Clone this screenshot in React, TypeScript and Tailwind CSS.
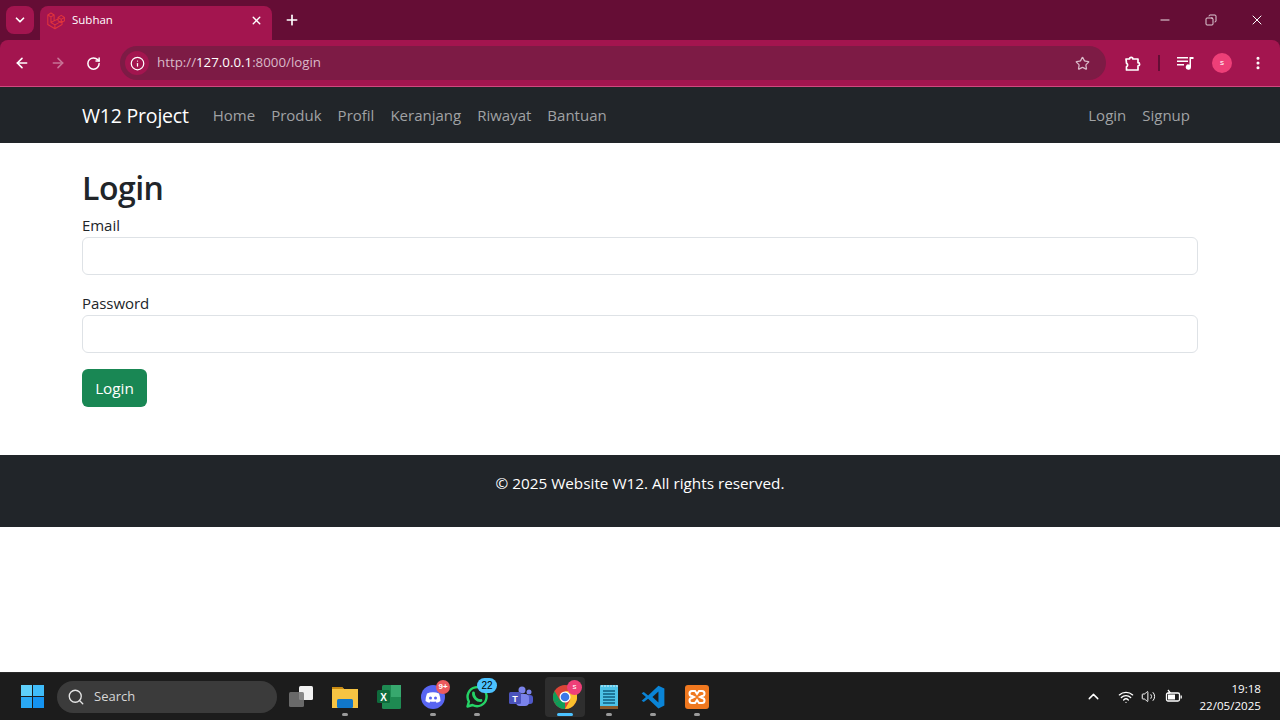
import React from "react";
import { ArrowLeft, ArrowRight, ChevronDown, ChevronUp, Copy, EllipsisVertical, Info, Minus, Plus, RotateCw, Search, Star, Volume2, Wifi, X } from "lucide-react";

const font = "font-['Open_Sans','Noto_Sans',sans-serif]";

const navLinks = ["Home", "Produk", "Profil", "Keranjang", "Riwayat", "Bantuan"];

const Laravel = () => (
  <svg width="19" height="19" viewBox="0 0 24 24" fill="none" stroke="#e0343c" strokeWidth="1.3" strokeLinejoin="round">
    <path d="M1 5L5 2.500L9 5L5 7.500zM1 5V17L10 22.500L19 17V12.500M5 7.500V14.500L10 17.500L19 12.500M9 5V12.500L5 14.500M10 17.500V22.500M14 8L18 5.500L22 8L18 10.500zM14 8V12.500L18 15M22 8V12.500L18 15M18 10.500V15M9 12.500L14 10" />
  </svg>
);

const TaskIcon = ({ children, active, open }: { children: React.ReactNode; active?: boolean; open?: boolean }) => (
  <div className={`relative flex h-[40px] w-[40px] items-center justify-center rounded ${active ? "bg-[#2e2e2e]" : ""}`}>
    <div className="flex h-[26px] w-[26px] items-center justify-center">{children}</div>
    {active ? <div className="absolute bottom-[1px] left-[12px] h-[3px] w-[16px] rounded-full bg-[#4cc2ff]" /> : null}
    {open ? <div className="absolute bottom-[1px] left-[17px] h-[3px] w-[6px] rounded-full bg-[#9a9a9a]" /> : null}
  </div>
);

const ChromeBar = () => (
  <div className="flex h-[87px] flex-col bg-[#650d35] font-['Liberation_Sans',sans-serif]">
    <div className="flex h-[40px] items-center">
      <div className="ml-[6px] flex h-[28px] w-[28px] items-center justify-center rounded-lg bg-[#a3154f]">
        <ChevronDown size={14} strokeWidth={3} className="text-white" />
      </div>
      <div className="ml-[6px] mt-[6px] flex h-[34px] w-[232px] items-center rounded-t-lg bg-[#a3154f] pb-[6px] pl-[7px] pr-[9px]">
        <Laravel />
        <span className={`ml-[6px] flex-1 text-[11.500px] text-white ${font}`}>Subhan</span>
        <X size={13} strokeWidth={2.6} className="text-white" />
      </div>
      <Plus size={16} strokeWidth={2.5} className="ml-[12px] text-white" />
      <div className="ml-auto flex items-center text-white">
        <div className="flex w-[46px] justify-center"><Minus size={14} strokeWidth={1.5} /></div>
        <div className="flex w-[46px] justify-center"><Copy size={12} strokeWidth={1.6} className="-scale-x-100" /></div>
        <div className="flex w-[46px] justify-center"><X size={16} strokeWidth={1.5} /></div>
      </div>
    </div>
    <div className="flex h-[47px] items-center rounded-t-lg border-b border-[#d0497f] bg-[#a3154f] text-white">
      <div className="flex w-[120px] items-center">
        <ArrowLeft size={16} strokeWidth={2.4} className="ml-[14px]" />
        <ArrowRight size={16} strokeWidth={2.4} className="ml-[20px] opacity-40" />
        <RotateCw size={15} strokeWidth={2.4} className="ml-[20px]" />
      </div>
      <div className="flex h-[34px] w-[986px] items-center rounded-full bg-[#7d1b45] pl-[5px] pr-[16px]">
        <div className="flex h-[24px] w-[24px] items-center justify-center rounded-full bg-[#a3154f]">
          <Info size={15} strokeWidth={2} />
        </div>
        <span className={`ml-[8px] flex-1 text-[13.300px] text-[#d9b9c8] ${font}`}>
          http://<span className="text-white">127.0.0.1</span>:8000/login
        </span>
        <Star size={15} strokeWidth={2} className="text-[#d9b9c8]" />
      </div>
      <svg width="18" height="18" viewBox="0 0 18 18" fill="none" stroke="#fff" strokeWidth="1.700" strokeLinejoin="round" className="ml-[18px]">
        <path d="M2 5h3.500a1.700 1.700 0 0 1 3.400 0H14v3.700a1.600 1.600 0 0 1 0 3.200V16H2.500v-3.200a2 2 0 0 0 0-3.600z" />
      </svg>
      <div className="ml-[16px] h-[16px] w-[2px] bg-[#650d35]" />
      <svg width="18" height="14" viewBox="0 0 18 14" fill="#fff" className="ml-[17px]">
        <path d="M0 1h11v1.500H0zM0 4.500h11V6H0zM0 8h7v1.500H0z" />
        <path d="M12.500 1H16.500V3H14V11a2.600 2.600 0 1 1-1.500-2.300z" />
      </svg>
      <div className="ml-[17px] flex h-[20px] w-[20px] items-center justify-center rounded-full bg-[#ee3f78] text-[8px]">s</div>
      <EllipsisVertical size={16} strokeWidth={2.6} className="ml-[18px]" />
    </div>
  </div>
);

const Navbar = () => (
  <nav className={`flex h-[56px] items-center bg-[#212529] pl-[82px] pr-[90px] ${font}`}>
    <span className="mt-[2px] text-[19.500px] tracking-[-0.2px] text-white">W12 Project</span>
    <div className="ml-[24px] flex gap-[16px]">
      {navLinks.map((link) => (
        <span key={link} className="text-[15px] text-[#a0a2a4]">{link}</span>
      ))}
    </div>
    <div className="ml-auto flex gap-[16px] text-[15px] text-[#a0a2a4]">
      <span>Login</span>
      <span>Signup</span>
    </div>
  </nav>
);

const Field = ({ label }: { label: string }) => (
  <div className="mb-[16px]">
    <label className="block h-[24px] text-[15px] leading-[24px] tracking-[-0.050px] text-[#212529]">{label}</label>
    <input className="block h-[38px] w-full rounded-md border border-[#dee2e6] bg-white" />
  </div>
);

const Taskbar = () => (
  <div className="flex h-[48px] items-center border-t border-[#2a2a2a] bg-[#1c1c1c] font-['Liberation_Sans',sans-serif] text-white">
    <div className="ml-[21px] grid h-[23px] w-[23px] grid-cols-2 gap-[1px]">
      <div className="bg-[#5fd0fb]" />
      <div className="bg-[#3fbcf9]" />
      <div className="bg-[#2aa9f5]" />
      <div className="bg-[#1493f1]" />
    </div>
    <div className="ml-[13px] flex h-[32px] w-[220px] items-center rounded-full bg-[#3b3b3b] pl-[10px]">
      <Search size={18} strokeWidth={1.8} className="text-[#e5e5e5]" />
      <span className={`ml-[9px] text-[13px] text-[#d6d6d6] ${font}`}>Search</span>
    </div>
    <div className="ml-[4px] flex items-center gap-[4px]">
      <TaskIcon>
        <svg width="26" height="26" viewBox="0 0 26 26">
          <rect x="11" y="2" width="14" height="14" rx="1.500" fill="#f2f2f2" />
          <rect x="1" y="8" width="15" height="15" rx="1.500" fill="#777" fillOpacity="0.85" />
        </svg>
      </TaskIcon>
      <TaskIcon open>
        <svg width="26" height="26" viewBox="0 0 26 26">
          <path d="M0 3h10l2 2h14v19H0z" fill="#f6c443" />
          <path d="M0 3h10l2 2H0z" fill="#c98a12" />
          <rect x="5" y="15" width="16" height="9" rx="1.500" fill="#1177c9" />
        </svg>
      </TaskIcon>
      <TaskIcon>
        <svg width="26" height="26" viewBox="0 0 26 26">
          <rect x="6" y="1" width="19" height="24" rx="1.500" fill="#1e8a52" />
          <rect x="15" y="1" width="10" height="12" fill="#37a86e" />
          <rect x="1" y="6" width="13" height="13" rx="1.500" fill="#0f6b3c" />
          <text x="7.500" y="16.500" fontSize="10" fontWeight="700" textAnchor="middle" fill="#fff">X</text>
        </svg>
      </TaskIcon>
      <TaskIcon open>
        <div className="relative h-[24px] w-[24px] rounded-full bg-[#5865f2]">
          <svg width="24" height="24" viewBox="0 0 24 24">
            <path d="M6 8.500c3.600-1.600 8.400-1.600 12 0 1 2.500 1.500 5 1.500 7.500-1.300 1-2.700 1.500-4 1.700l-.8-1.300c-1.700.4-3.700.4-5.400 0l-.8 1.300c-1.300-.2-2.700-.7-4-1.700C4.500 13.500 5 11 6 8.500z" fill="#fff" />
            <circle cx="9.500" cy="13" r="1.500" fill="#5865f2" />
            <circle cx="14.500" cy="13" r="1.500" fill="#5865f2" />
          </svg>
          <div className="absolute -right-[5px] -top-[5px] flex h-[14px] w-[14px] items-center justify-center rounded-full bg-[#ec5a5d] text-[8px] font-bold">9+</div>
        </div>
      </TaskIcon>
      <TaskIcon open>
        <div className="relative">
          <svg width="24" height="24" viewBox="0 0 24 24" fill="none" stroke="#25d366" strokeWidth="2.400">
            <path d="M2.500 21.500l1.400-5A9.500 9.500 0 1 1 7.500 20z" strokeLinejoin="round" />
            <path d="M8.500 8c-.5 4 3.500 8 7.500 7.500" strokeWidth="2.800" strokeLinecap="round" />
          </svg>
          <div className="absolute -right-[8px] -top-[7px] flex h-[15px] w-[20px] items-center justify-center rounded-full bg-[#4cc2ff] text-[10px] text-black">22</div>
        </div>
      </TaskIcon>
      <TaskIcon>
        <svg width="26" height="26" viewBox="0 0 26 26">
          <circle cx="21" cy="8" r="2.500" fill="#7b83eb" />
          <rect x="17" y="11" width="8" height="9" rx="3" fill="#5059c9" />
          <circle cx="14" cy="6" r="3.500" fill="#7b83eb" />
          <rect x="8" y="10" width="13" height="12" rx="4" fill="#7b83eb" />
          <rect x="1" y="8" width="12" height="12" rx="1.500" fill="#4b53bc" />
          <text x="7" y="17.500" fontSize="9" fontWeight="700" textAnchor="middle" fill="#fff">T</text>
        </svg>
      </TaskIcon>
      <TaskIcon active>
        <div className="relative">
          <svg width="24" height="24" viewBox="0 0 24 24">
            <circle cx="12" cy="12" r="12" fill="#db4437" />
            <path d="M12 12L1.600 18A12 12 0 0 0 12 24z" fill="#0f9d58" />
            <path d="M1.600 6A12 12 0 0 0 1.600 18L6.800 15z" fill="#0f9d58" />
            <path d="M12 6h10.400A12 12 0 0 1 12 24l5.200-9z" fill="#fbc02d" />
            <circle cx="12" cy="12" r="5.500" fill="#fff" />
            <circle cx="12" cy="12" r="4.300" fill="#3b78e7" />
          </svg>
          <div className="absolute -right-[5px] -top-[5px] flex h-[15px] w-[15px] items-center justify-center rounded-full bg-[#ee3f78] text-[8px]">s</div>
        </div>
      </TaskIcon>
      <TaskIcon open>
        <svg width="26" height="26" viewBox="0 0 26 26">
          <rect x="4" y="1" width="18" height="24" rx="1" fill="#4dc3e8" />
          <rect x="4" y="22" width="18" height="3" fill="#8a5a2b" />
          <path d="M7 7h12M7 10h12M7 13h12M7 16h12M7 19h12" stroke="#0f5f80" strokeWidth="1.500" />
          <path d="M6 1v2M9 1v2M12 1v2M15 1v2M18 1v2M21 1v2" stroke="#d8f2fb" strokeWidth="1" />
        </svg>
      </TaskIcon>
      <TaskIcon open>
        <svg width="26" height="26" viewBox="0 0 24 24">
          <path d="M17 1.500l5.500 2.700v15.600L17 22.500 7.500 13.500l-4 3.200L1.500 15.500 5.500 12l-4-3.500 2-1.200 4 3.200z" fill="#0a84d6" />
          <path d="M17 7l-5.500 5 5.500 5z" fill="#1c1c1c" />
        </svg>
      </TaskIcon>
      <TaskIcon open>
        <svg width="26" height="26" viewBox="0 0 26 26">
          <rect x="1" y="1" width="24" height="24" rx="3" fill="#f0781f" />
          <path d="M8 7h3l2 3 2-3h3a2 2 0 0 1 0 5l-2 1 2 1a2 2 0 0 1 0 5h-3l-2-3-2 3H8a2 2 0 0 1 0-5l2-1-2-1a2 2 0 0 1 0-5z" fill="none" stroke="#fff" strokeWidth="2" />
        </svg>
      </TaskIcon>
    </div>
    <div className="ml-auto flex items-center">
      <ChevronUp size={17} strokeWidth={2} />
      <Wifi size={16} strokeWidth={2} className="ml-[16px]" />
      <Volume2 size={15} strokeWidth={1.600} className="ml-[7px]" />
      <svg width="18" height="15" viewBox="0 0 18 15" className="ml-[9px]" fill="none" stroke="#fff" strokeWidth="1.300">
        <rect x="1.500" y="4" width="13" height="8" rx="1.500" />
        <rect x="3" y="5.500" width="7" height="5" fill="#fff" stroke="none" />
        <path d="M16.200 6.500v3M3 1l2 2.500-2 1" />
      </svg>
      <div className={`ml-[16px] mr-[19px] text-right text-[11.600px] leading-[17px] ${font}`}>
        <div>19:18</div>
        <div>22/05/2025</div>
      </div>
    </div>
  </div>
);

export default function App() {
  return (
    <div className="flex h-[720px] flex-col overflow-hidden bg-white">
      <ChromeBar />
      <Navbar />
      <main className={`px-[82px] pb-[48px] ${font}`}>
        <h1 className="mb-[4px] mt-[24px] text-[32px] font-semibold leading-[42px] tracking-[-0.500px] text-[#212529]">Login</h1>
        <Field label="Email" />
        <Field label="Password" />
        <button className="h-[38px] w-[65px] rounded-md bg-[#198754] text-[15.300px] text-white">Login</button>
      </main>
      <footer className={`flex h-[72px] justify-center bg-[#212529] pt-[16px] text-[15.300px] leading-[24px] text-white ${font}`}>
        © 2025 Website W12. All rights reserved.
      </footer>
      <div className="flex-1" />
      <Taskbar />
    </div>
  );
}
